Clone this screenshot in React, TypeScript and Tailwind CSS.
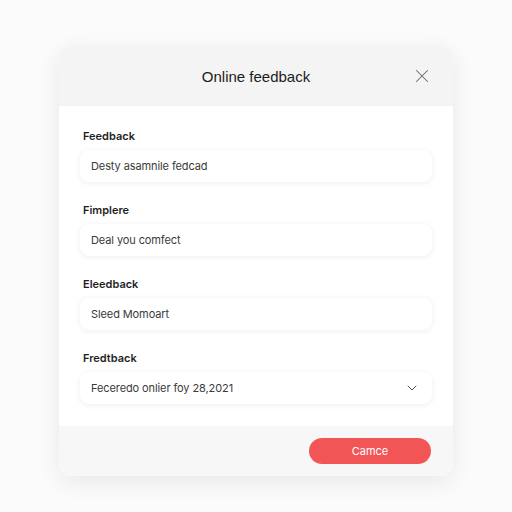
import { X, ChevronDown } from 'lucide-react';

const fields = [
  { label: 'Feedback', value: 'Desty asamnile fedcad' },
  { label: 'Fimplere', value: 'Deal you comfect' },
  { label: 'Eleedback', value: 'Sleed Momoart' },
  { label: 'Fredtback', value: 'Feceredo onlier foy 28,2021', select: true },
];

export default function App() {
  return (
    <div
      className="w-[512px] h-[512px] bg-[#fbfbfb] pt-[46px] pl-[59px]"
      style={{ fontFamily: 'Inter, "Noto Sans", sans-serif' }}
    >
      <div className="w-[394px] rounded-[12px] overflow-hidden bg-white shadow-[0_6px_24px_rgba(0,0,0,0.08)]">
        {/* Header */}
        <div className="h-[60px] bg-[#f4f4f4] flex items-center justify-center relative pt-[3px]">
          <h1 className="text-[15px] text-[#1c1c1c] font-['Liberation_Sans',Arial,sans-serif]">Online feedback</h1>
          <button className="absolute right-[20px] top-[19px] text-[#6a6a6a]">
            <X size={22} strokeWidth={1.1} />
          </button>
        </div>

        {/* Body */}
        <div className="pt-[22px] pb-[22px] px-[21px] flex flex-col gap-[20px]">
          {fields.map((f) => (
            <div key={f.label} className="flex flex-col gap-[6px]">
              <p className="pl-[3px] text-[11px] leading-[16px] font-semibold text-[#1f1f1f]">{f.label}</p>
              <div className="h-[32px] rounded-[9px] bg-white shadow-[0_1px_6px_rgba(0,0,0,0.07)] flex items-center justify-between pl-[11px] pr-[12px]">
                <span className="text-[11px] text-[#3a3a3a] tracking-[-0.1px]">{f.value}</span>
                {f.select && <ChevronDown size={16} strokeWidth={1.4} className="text-[#444]" />}
              </div>
            </div>
          ))}
        </div>

        {/* Footer */}
        <div className="h-[50px] bg-[#f7f7f7] flex items-center justify-end pr-[22px]">
          <button className="w-[122px] h-[26px] rounded-full bg-[#f25555] text-white text-[11px]">
            Camce
          </button>
        </div>
      </div>
    </div>
  );
}
